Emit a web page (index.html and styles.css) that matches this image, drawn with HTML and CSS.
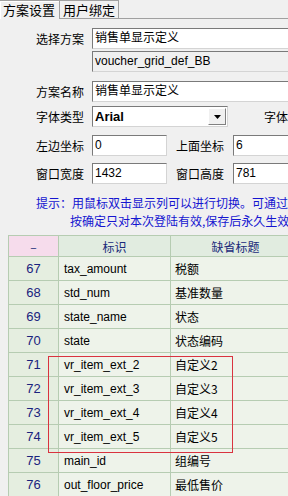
FILE: index.html
```html
<!DOCTYPE html>
<html lang="zh-CN">
<head>
    <meta charset="UTF-8">
    <meta name="viewport" content="width=device-width, initial-scale=1.0">
    <title>方案设置</title>
    <link rel="stylesheet" href="styles.css">
</head>
<body>
    <div class="tabs">
        <div class="tab active">方案设置</div>
        <div class="tab">用户绑定</div>
        <div class="tab-rest"></div>
    </div>

    <div class="form">
        <div class="row r1">
            <label>选择方案</label>
            <div class="input wide">销售单显示定义</div>
        </div>
        <div class="row r2">
            <label></label>
            <div class="input wide readonly">voucher_grid_def_BB</div>
        </div>
        <div class="row r3">
            <label>方案名称</label>
            <div class="input wide">销售单显示定义</div>
        </div>
        <div class="row r4">
            <label>字体类型</label>
            <div class="select">
                <span class="select-text">Arial</span>
                <span class="select-btn"><svg width="7" height="4" viewBox="0 0 7 4"><path d="M0 0h7L3.5 4z" fill="#000"/></svg></span>
            </div>
            <label class="label2">字体</label>
        </div>
        <div class="row r5">
            <label>左边坐标</label>
            <div class="input short">0</div>
            <label class="label-mid">上面坐标</label>
            <div class="input wide2">6</div>
        </div>
        <div class="row r6">
            <label>窗口宽度</label>
            <div class="input short">1432</div>
            <label class="label-mid">窗口高度</label>
            <div class="input wide2">781</div>
        </div>
        <div class="hint">
            <p>提示：用鼠标双击显示列可以进行切换。可通过</p>
            <p class="indent">按确定只对本次登陆有效,保存后永久生效</p>
        </div>
    </div>

    <div class="grid-wrap">
        <table class="grid">
            <colgroup>
                <col class="c1">
                <col class="c2">
                <col class="c3">
            </colgroup>
            <thead>
                <tr>
                    <th class="num">–</th>
                    <th>标识</th>
                    <th>缺省标题</th>
                </tr>
            </thead>
            <tbody>
                <tr><td class="num">67</td><td>tax_amount</td><td class="cn">税额</td></tr>
                <tr><td class="num">68</td><td>std_num</td><td class="cn">基准数量</td></tr>
                <tr><td class="num">69</td><td>state_name</td><td class="cn">状态</td></tr>
                <tr><td class="num">70</td><td>state</td><td class="cn">状态编码</td></tr>
                <tr><td class="num">71</td><td>vr_item_ext_2</td><td class="cn">自定义2</td></tr>
                <tr><td class="num">72</td><td>vr_item_ext_3</td><td class="cn">自定义3</td></tr>
                <tr><td class="num">73</td><td>vr_item_ext_4</td><td class="cn">自定义4</td></tr>
                <tr><td class="num">74</td><td>vr_item_ext_5</td><td class="cn">自定义5</td></tr>
                <tr><td class="num">75</td><td>main_id</td><td class="cn">组编号</td></tr>
                <tr><td class="num">76</td><td>out_floor_price</td><td class="cn">最低售价</td></tr>
            </tbody>
        </table>
        <div class="mark"></div>
    </div>
</body>
</html>
```

FILE: styles.css
```css
body {
    margin: 0;
    width: 288px;
    height: 496px;
    overflow: hidden;
    background: #f0f0f0;
    font-family: "Liberation Sans", "Noto Sans CJK SC", sans-serif;
    font-size: 12px;
    color: #000;
}

/* tabs */
.tabs {
    display: flex;
    height: 19px;
}
.tab {
    font-family: "Noto Sans CJK SC", sans-serif;
    font-size: 13px;
    line-height: 17px;
    padding: 0 3px;
    border: 1px solid #a0a0a0;
    border-left: none;
    background: #f0f0f0;
}
.tab.active {
    border-bottom: none;
    width: 53px;
    box-shadow: inset 1px 1px 0 #fff;
}
.tab-rest {
    flex: 1;
    border-bottom: 1px solid #a0a0a0;
}

/* form */
.form {
    padding-top: 0;
}
.row {
    display: flex;
    align-items: center;
    height: 21px;
    white-space: nowrap;
}
.row label {
    width: 84px;
    flex: none;
    text-align: right;
    padding-right: 8px;
    font-family: "Noto Sans CJK SC", sans-serif;
    font-size: 12px;
}
.r1 { margin-top: 9px; }
.r2 { margin-top: 2px; }
.r3 { margin-top: 9px; }
.r4 { margin-top: 4px; }
.r5 { margin-top: 8px; }
.r6 { margin-top: 7px; }

.input {
    flex: none;
    height: 19px;
    line-height: 19px;
    border: 1px solid #7a7a7a;
    border-right-color: #d4d4d4;
    border-bottom-color: #d4d4d4;
    background: #fff;
    padding-left: 2px;
    font-family: "Liberation Sans", "Noto Sans CJK SC", sans-serif;
    font-size: 12px;
    overflow: hidden;
}
.input.wide { width: 220px; }
.input.readonly { background: #f0f0f0; }
.input.short { width: 71px; }
.input.wide2 { width: 80px; }

.row .label-mid {
    width: auto;
    padding: 0 9px 0 9px;
}

.select {
    flex: none;
    display: flex;
    width: 134px;
    height: 19px;
    border: 1px solid #7a7a7a;
    border-right-color: #d4d4d4;
    border-bottom-color: #d4d4d4;
    background: #fff;
}
.select-text {
    flex: 1;
    padding-left: 2px;
    line-height: 19px;
    font-weight: bold;
    font-size: 13px;
}
.select-btn {
    width: 16px;
    margin: 1px;
    display: flex;
    align-items: center;
    justify-content: center;
    background: #f0f0f0;
    border: 1px solid #fff;
    border-right-color: #808080;
    border-bottom-color: #808080;
}
.row .label2 {
    width: auto;
    padding-left: 36px;
}

.hint {
    color: #1515d0;
    font-family: "Noto Sans CJK SC", sans-serif;
    font-size: 12px;
    padding-top: 10px;
}
.hint p {
    margin: 0;
    line-height: 18px;
    padding-left: 36px;
    white-space: nowrap;
}
.hint p.indent {
    padding-left: 70px;
}

/* grid */
.grid-wrap {
    position: relative;
    margin: 5px 0 0 8px;
}
.grid {
    border-collapse: collapse;
    table-layout: fixed;
    width: 292px;
    background: #eef3ea;
}
.grid col.c1 { width: 50px; }
.grid col.c2 { width: 112px; }
.grid col.c3 { width: 130px; }
.grid th, .grid td {
    border: 1px solid #b6ccb2;
    height: 23px;
    padding: 0 0 0 5px;
    text-align: left;
    font-weight: normal;
    white-space: nowrap;
    overflow: hidden;
}
.grid th {
    background: #e1ece0;
    color: #1a2a7a;
    text-align: center;
    font-family: "Noto Sans CJK SC", sans-serif;
    height: 20px;
    padding: 0;
}
.grid th.num {
    background: #f6dcec;
}
.grid td.num {
    padding: 0;
    text-align: center;
    color: #1a237e;
    background: #e5eee0;
    font-size: 13px;
}
.grid td.cn {
    font-family: "Noto Sans CJK SC", sans-serif;
    padding-left: 4px;
}

/* red marker around rows 71-74 */
.mark {
    position: absolute;
    left: 40px;
    top: 121px;
    width: 183px;
    height: 95px;
    border: 1px solid #d9333f;
}
```
